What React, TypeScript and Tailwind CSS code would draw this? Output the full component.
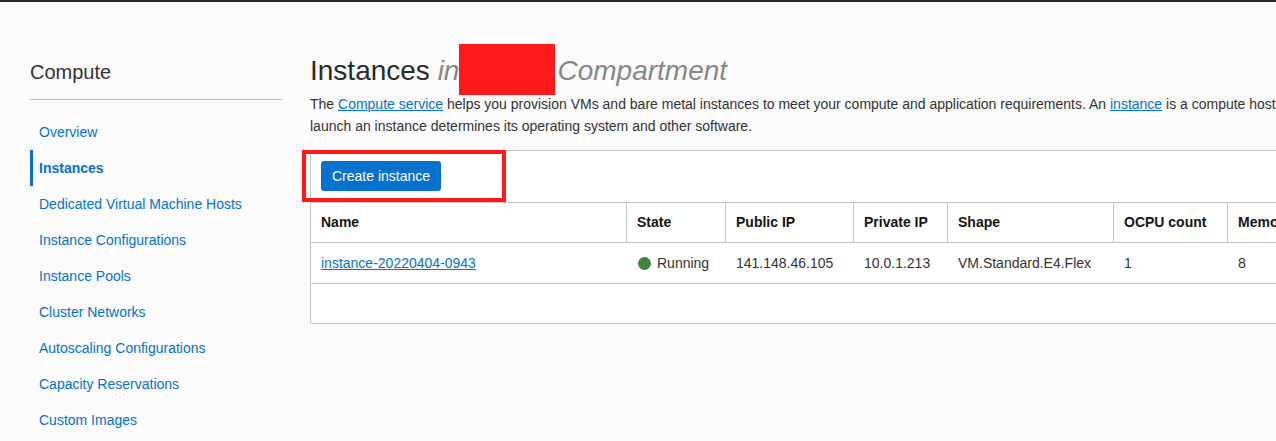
import React from "react";

const navItems = [
  "Overview",
  "Instances",
  "Dedicated Virtual Machine Hosts",
  "Instance Configurations",
  "Instance Pools",
  "Cluster Networks",
  "Autoscaling Configurations",
  "Capacity Reservations",
  "Custom Images",
];

const cols = [
  { label: "Name", w: "w-[316px]" },
  { label: "State", w: "w-[99px]" },
  { label: "Public IP", w: "w-[128px]" },
  { label: "Private IP", w: "w-[94px]" },
  { label: "Shape", w: "w-[166px]" },
  { label: "OCPU count", w: "w-[114px]" },
  { label: "Memory (GB)", w: "w-[160px]" },
];

export default function App() {
  return (
    <div className="w-[1276px] h-[441px] overflow-hidden bg-[#fbfbfb] border-t-2 border-[#1c2630] font-['Liberation_Sans',Arial,sans-serif] text-[#333]">
      <div className="flex">
        {/* Sidebar */}
        <aside className="ml-[30px] w-[252px] shrink-0 pt-[58px]">
          <div className="text-[20px] leading-[24px] text-[#333] pb-[15px] border-b border-[#bdbdbd]">
            Compute
          </div>
          <nav className="mt-[14px] flex flex-col">
            {navItems.map((item) => {
              const active = item === "Instances";
              return (
                <div
                  key={item}
                  className={
                    active
                      ? "h-[36px] flex items-center border-l-[3px] border-[#0572ce] pl-[6px] text-[14px] font-bold text-[#0572ce]"
                      : "h-[36px] flex items-center border-l-[3px] border-transparent pl-[6px] text-[14px] text-[#0572ce]"
                  }
                >
                  {item}
                </div>
              );
            })}
          </nav>
        </aside>

        {/* Main */}
        <main className="ml-[28px] w-[1200px] shrink-0 pt-[51px]">
          <h1 className="text-[28px] leading-[34px] font-normal text-[#2b2b2b] whitespace-nowrap">
            Instances{" "}
            <em className="text-[#888]">in</em>
            <span className="inline-block w-[96px] h-[51px] bg-[#fe1a1a] -mt-[9px] -mb-[15px]" />
            <em className="text-[#888] ml-[2px]">Compartment</em>
          </h1>
          <p className="mt-[5px] text-[14px] leading-[22px] text-[#333] whitespace-nowrap">
            The{" "}
            <a className="text-[#0572ce] underline">Compute service</a> helps you provision VMs and bare metal
            instances to meet your compute and application requirements. An{" "}
            <a className="text-[#0572ce] underline">instance</a> is a compute host. The image that you use to
            <br />
            launch an instance determines its operating system and other software.
          </p>

          {/* Panel */}
          <div className="relative mt-[13px] w-[1150px] border border-[#c4c6ca] bg-white rounded-[2px]">
            <div className="h-[51px] flex items-start pt-[10px] pl-[10px]">
              <button className="w-[120px] h-[30px] rounded-[3px] bg-[#0572ce] text-white text-[14px]">
                Create instance
              </button>
            </div>
            {/* red highlight overlay */}
            <div className="absolute left-[-9px] top-[-1px] w-[204px] h-[52px] border-[4px] border-[#fe1a1a]" />

            {/* Header */}
            <div className="flex border-t border-b border-[#c4c6ca] h-[41px]">
              {cols.map((c, i) => (
                <div
                  key={c.label}
                  className={
                    (i < cols.length - 1 ? "border-r border-[#c4c6ca] " : "") +
                    c.w +
                    " shrink-0 flex items-center pl-[10px] text-[14px] font-bold text-[#161513]"
                  }
                >
                  {c.label}
                </div>
              ))}
            </div>

            {/* Row */}
            <div className="flex h-[41px] border-b border-[#c4c6ca] text-[14px] text-[#333]">
              <div className="w-[316px] shrink-0 flex items-center pl-[10px]">
                <a className="text-[#0572ce] underline">instance-20220404-0943</a>
              </div>
              <div className="w-[99px] shrink-0 flex items-center pl-[11px]">
                <span className="inline-block w-[13px] h-[13px] rounded-full bg-[#3b873b] mr-[6px]" />
                Running
              </div>
              <div className="w-[128px] shrink-0 flex items-center pl-[10px]">141.148.46.105</div>
              <div className="w-[94px] shrink-0 flex items-center pl-[10px]">10.0.1.213</div>
              <div className="w-[166px] shrink-0 flex items-center pl-[10px]">VM.Standard.E4.Flex</div>
              <div className="w-[114px] shrink-0 flex items-center pl-[10px]">1</div>
              <div className="w-[160px] shrink-0 flex items-center pl-[10px]">8</div>
            </div>

            {/* Empty footer */}
            <div className="h-[39px]" />
          </div>
        </main>
      </div>
    </div>
  );
}
